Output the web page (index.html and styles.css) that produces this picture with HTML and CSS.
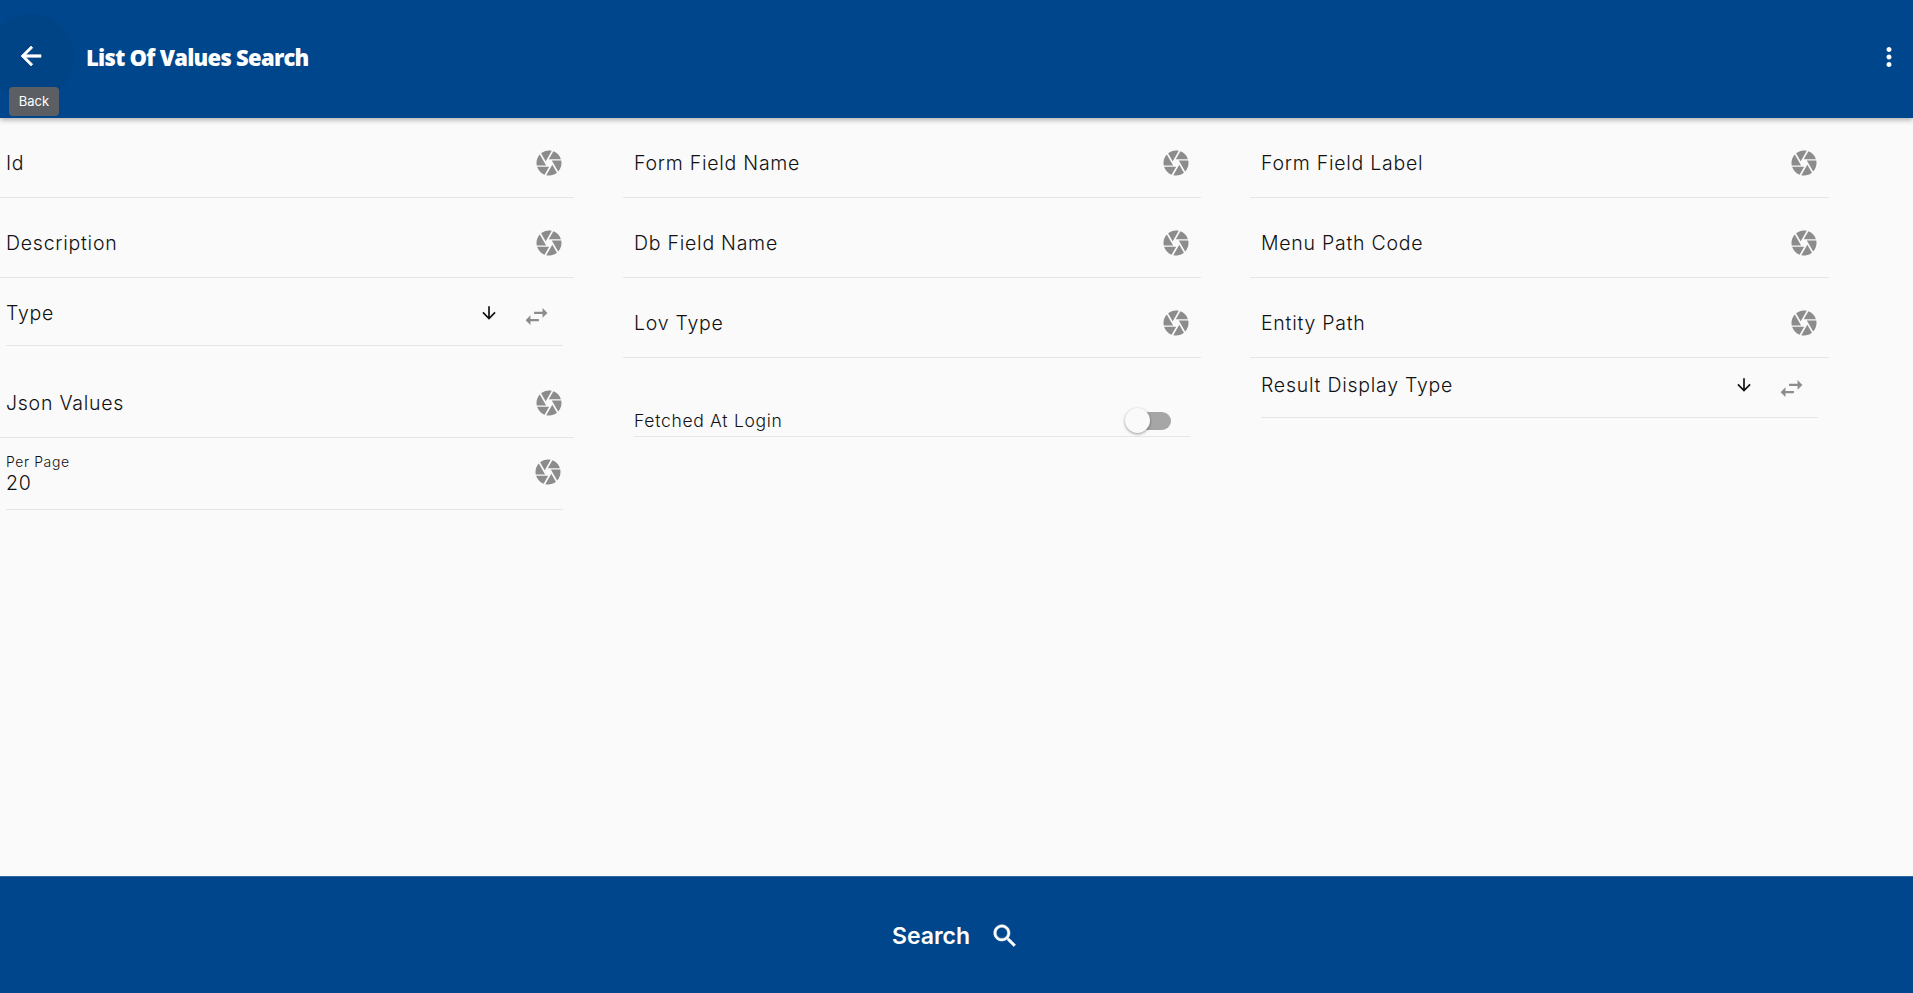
FILE: index.html
```html
<!DOCTYPE html>
<html lang="en">
<head>
<meta charset="utf-8">
<title>List Of Values Search</title>
<link rel="stylesheet" href="styles.css">
</head>
<body>
<svg class="defs" width="0" height="0" aria-hidden="true">
  <symbol id="i-camera" viewBox="0 0 24 24"><path d="M9.4 10.5l4.77-8.26C13.47 2.09 12.75 2 12 2c-2.4 0-4.6.85-6.32 2.25l3.66 6.35.06-.1zM21.54 9c-.92-2.92-3.15-5.26-6-6.34L11.88 9h9.66zm.26 1h-7.49l.29.5 4.76 8.25C21 16.97 22 14.61 22 12c0-.69-.07-1.35-.2-2zM8.54 12l-3.9-6.75C3.01 7.03 2 9.39 2 12c0 .69.07 1.35.2 2h7.49l-1.15-2zm-6.08 3c.92 2.92 3.15 5.26 6 6.34L12.12 15H2.46zm11.27 0l-3.9 6.76c.7.15 1.42.24 2.17.24 2.4 0 4.6-.85 6.32-2.25l-3.66-6.35-.93 1.6z"/></symbol>
  <symbol id="i-down" viewBox="0 0 24 24"><path d="M20 12l-1.41-1.41L13 16.17V4h-2v12.17l-5.58-5.59L4 12l8 8 8-8z"/></symbol>
  <symbol id="i-swap" viewBox="0 0 24 24"><path d="M6.99 11L3 15l3.99 4v-3H14v-2H6.99v-3zM21 9l-3.99-4v3H10v2h7.01v3L21 9z"/></symbol>
</svg>

<header class="topbar">
  <div class="back">
    <svg class="back-icon" viewBox="0 0 24 24"><path d="M20 11H7.83l5.59-5.59L12 4l-8 8 8 8 1.41-1.41L7.83 13H20v-2z"/></svg>
  </div>
  <h1 class="title">List Of Values Search</h1>
  <svg class="menu-icon" viewBox="0 0 24 24"><path d="M12 8c1.1 0 2-.9 2-2s-.9-2-2-2-2 .9-2 2 .9 2 2 2zm0 2c-1.1 0-2 .9-2 2s.9 2 2 2 2-.9 2-2-.9-2-2-2zm0 6c-1.1 0-2 .9-2 2s.9 2 2 2 2-.9 2-2-.9-2-2-2z"/></svg>
  <div class="tooltip">Back</div>
</header>

<main class="form">
  <section class="col col-first">
    <div class="field h80"><span class="label">Id</span><svg class="camera"><use href="#i-camera"/></svg></div>
    <div class="field h80"><span class="label">Description</span><svg class="camera"><use href="#i-camera"/></svg></div>
    <div class="field select h68 narrow-first"><span class="label">Type</span><svg class="down"><use href="#i-down"/></svg><svg class="swap"><use href="#i-swap"/></svg></div>
    <div class="field h92"><span class="label">Json Values</span><svg class="camera"><use href="#i-camera"/></svg></div>
    <div class="field filled h72 narrow-first">
      <div class="stack"><span class="mini">Per Page</span><span class="value">20</span></div>
      <svg class="camera"><use href="#i-camera"/></svg>
    </div>
  </section>

  <section class="col">
    <div class="field h80"><span class="label">Form Field Name</span><svg class="camera"><use href="#i-camera"/></svg></div>
    <div class="field h80"><span class="label">Db Field Name</span><svg class="camera"><use href="#i-camera"/></svg></div>
    <div class="field h80"><span class="label">Lov Type</span><svg class="camera"><use href="#i-camera"/></svg></div>
    <div class="field toggle-row h79 narrow"><span class="label small">Fetched At Login</span><span class="toggle"><span class="track"></span><span class="thumb"></span></span></div>
  </section>

  <section class="col">
    <div class="field h80"><span class="label">Form Field Label</span><svg class="camera"><use href="#i-camera"/></svg></div>
    <div class="field h80"><span class="label">Menu Path Code</span><svg class="camera"><use href="#i-camera"/></svg></div>
    <div class="field h80"><span class="label">Entity Path</span><svg class="camera"><use href="#i-camera"/></svg></div>
    <div class="field select h60 narrow"><span class="label">Result Display Type</span><svg class="down"><use href="#i-down"/></svg><svg class="swap"><use href="#i-swap"/></svg></div>
  </section>
</main>

<footer class="bottombar">
  <span class="search-text">Search</span>
  <svg class="search-icon" viewBox="0 0 24 24"><path d="M15.5 14h-.79l-.28-.27C15.41 12.59 16 11.11 16 9.5 16 5.91 13.09 3 9.5 3S3 5.91 3 9.5 5.91 16 9.5 16c1.61 0 3.09-.59 4.23-1.57l.27.28v.79l5 4.99L20.49 19l-4.99-5zm-6 0C7.01 14 5 11.99 5 9.5S7.01 5 9.5 5 14 7.01 14 9.5 11.99 14 9.5 14z"/></svg>
</footer>
</body>
</html>
```

FILE: styles.css
```css
* { box-sizing: border-box; }
html, body { height: 100%; }
body {
  margin: 0;
  height: 993px;
  overflow: hidden;
  display: flex;
  flex-direction: column;
  background: #fafafa;
  color: #111;
  font-family: Inter, "Liberation Sans", sans-serif;
}
.defs { position: absolute; }

/* Top bar */
.topbar {
  position: relative;
  z-index: 2;
  flex: 0 0 118px;
  display: flex;
  align-items: center;
  background: #00468c;
  box-shadow: 0 2px 5px rgba(0, 0, 0, 0.3);
  padding-bottom: 4px;
}
.back {
  flex: 0 0 86px;
  height: 86px;
  margin-left: -12px;
  margin-right: 12px;
  display: flex;
  align-items: center;
  justify-content: center;
  border-radius: 50%;
  background: #004485;
}
.back-icon {
  width: 30px;
  height: 30px;
  fill: #fff;
  stroke: #fff;
  stroke-width: 0.5;
  margin-bottom: 2px;
}
.title {
  flex: 1;
  margin: 0;
  font-family: "Open Sans", sans-serif;
  font-size: 22px;
  font-weight: 800;
  color: #fff;
  letter-spacing: -0.73px;
}
.menu-icon { width: 30px; height: 30px; fill: #fff; margin-right: 9px; }
.tooltip {
  position: absolute;
  left: 9px;
  top: 87px;
  width: 50px;
  height: 29px;
  border-radius: 4px;
  background: #5b5f64;
  color: #fff;
  font-size: 13px;
  line-height: 29px;
  text-align: center;
}

/* Form grid */
.form {
  flex: 1;
  display: grid;
  grid-template-columns: 574px 578px 579px;
  column-gap: 49px;
  align-content: start;
  align-items: start;
}
.col { display: flex; flex-direction: column; }
.field {
  display: flex;
  align-items: flex-end;
  border-bottom: 1px solid #e4e7ea;
  padding: 0 10px 21px 11px;
}
.col-first .field { padding-left: 6px; }
.h80 { height: 80px; }
.h68 { height: 68px; }
.h92 { height: 92px; }
.h72 { height: 72px; }
.h79 { height: 79px; }
.h60 { height: 60px; }
.narrow { margin-left: 11px; margin-right: 11px; padding-left: 0; }
.narrow-first { margin-right: 11px; margin-left: 6px; }
.col-first .narrow-first { padding-left: 0; }

.label {
  flex: 1;
  font-size: 19.5px;
  font-weight: 300;
  line-height: 26px;
  letter-spacing: 0.75px;
  color: #111;
}
.label.small { font-size: 17.5px; letter-spacing: 0.7px; }

.camera { width: 30px; height: 30px; fill: #8c8c8c; margin-bottom: -1.5px; margin-right: 0.5px; }

.select { padding-right: 0; padding-bottom: 19.5px; }
.down { width: 20px; height: 20px; fill: #111; margin-bottom: 3px; margin-right: 23px; }
.swap { width: 29px; height: 29px; fill: #8c8c8c; margin-bottom: -5px; margin-right: 12px; }

.filled { padding-bottom: 15px; padding-right: 0; }
.filled .camera { margin-bottom: 7px; margin-right: 0; }
.stack { flex: 1; display: flex; flex-direction: column; }
.mini { font-size: 14px; font-weight: 300; line-height: 17px; letter-spacing: 0.6px; margin-bottom: 2px; }
.value { font-size: 19.5px; font-weight: 300; line-height: 22px; letter-spacing: 0.75px; }

.toggle-row { padding-bottom: 2px; padding-right: 19px; }
.toggle { position: relative; flex: 0 0 46px; height: 25px; margin-bottom: 1.5px; }
.track {
  position: absolute;
  left: 4px; right: 0; top: 4px;
  height: 18px;
  border-radius: 9px;
  background: #a6a6a6;
}
.thumb {
  position: absolute;
  left: 0; top: 0;
  width: 25px; height: 25px;
  border-radius: 50%;
  background: #fafafa;
  box-shadow: 0 1px 3px rgba(0, 0, 0, 0.4);
}

/* Bottom bar */
.bottombar {
  flex: 0 0 117px;
  display: flex;
  align-items: center;
  justify-content: center;
  gap: 20px;
  background: #00468c;
  border-top: 1px solid #2e69a4;
  padding-top: 1px;
}
.search-text { font-size: 23px; font-weight: 600; color: #fff; }
.search-icon { width: 30px; height: 30px; fill: #fff; stroke: #fff; stroke-width: 0.4; margin-right: 1px; }
```
